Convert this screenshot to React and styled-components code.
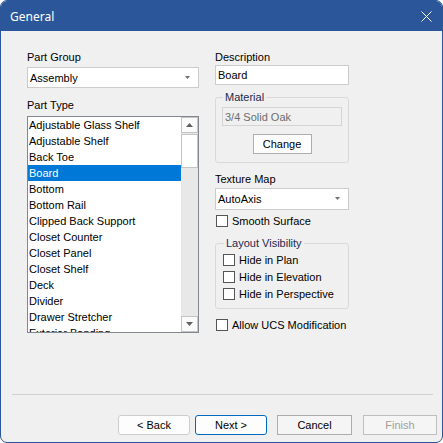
import React from "react";
import styled, { createGlobalStyle } from "styled-components";

const GlobalStyle = createGlobalStyle`
    html, body {
        margin: 0;
        padding: 0;
        background: #ffffff;
    }
    body {
        font-family: "Liberation Sans", Arial, sans-serif;
        font-size: 11px;
        color: #000000;
    }
`;

const Window = styled.div`
    width: 443px;
    height: 443px;
    box-sizing: border-box;
    border: 1px solid #2b579a;
    border-radius: 7px;
    overflow: hidden;
    display: flex;
    flex-direction: column;
    background: #f0f0f0;
`;

const TitleBar = styled.div`
    height: 30px;
    flex: none;
    background: #2b579a;
    color: #ffffff;
    display: flex;
    align-items: center;
    justify-content: space-between;
    padding: 0 10px 0 9px;
    font-family: "Noto Sans", "Segoe UI", sans-serif;
    font-size: 12px;
`;

const Body = styled.div`
    display: grid;
    grid-template-columns: 172px 134px;
    column-gap: 16px;
    padding: 20px 0 0 26px;
    align-items: start;
`;

const Column = styled.div`
    display: flex;
    flex-direction: column;
`;

const Label = styled.div`
    line-height: 13px;
    height: 13px;
    margin-top: ${(p) => p.$top || 0}px;
    white-space: nowrap;
`;

const Combo = styled.div`
    height: ${(p) => p.$h || 21}px;
    margin-top: ${(p) => p.$top || 0}px;
    box-sizing: border-box;
    border: 1px solid #cccccc;
    background: #ffffff;
    display: flex;
    align-items: center;
    justify-content: space-between;
    padding: 0 8px 0 2px;
    svg {
        flex: none;
    }
`;

const TextBox = styled.div`
    height: ${(p) => p.$h || 20}px;
    margin-top: ${(p) => p.$top || 0}px;
    box-sizing: border-box;
    border: 1px solid ${(p) => (p.$disabled ? "#d4d4d4" : "#cccccc")};
    background: ${(p) => (p.$disabled ? "#f0f0f0" : "#ffffff")};
    color: ${(p) => (p.$disabled ? "#6d6d6d" : "#000000")};
    display: flex;
    align-items: center;
    padding-left: 2px;
`;

const ListBox = styled.div`
    margin-top: 4px;
    height: 217px;
    box-sizing: border-box;
    border: 1px solid #828790;
    background: #ffffff;
    display: flex;
    overflow: hidden;
`;

const Items = styled.div`
    flex: 1;
    overflow: hidden;
`;

const Item = styled.div`
    height: 16px;
    line-height: 16px;
    padding-left: 1px;
    white-space: nowrap;
    background: ${(p) => (p.$selected ? "#0078d7" : "transparent")};
    color: ${(p) => (p.$selected ? "#ffffff" : "#000000")};
`;

const ScrollBar = styled.div`
    width: 17px;
    flex: none;
    background: #e8e8e8;
    display: flex;
    flex-direction: column;
`;

const ScrollButton = styled.div`
    height: 16px;
    box-sizing: border-box;
    border: 1px solid #c4c4c4;
    background: #fafafa;
    display: flex;
    align-items: center;
    justify-content: center;
    margin-top: ${(p) => (p.$down ? "auto" : "0")};
`;

const Thumb = styled.div`
    height: 34px;
    box-sizing: border-box;
    border: 1px solid #c4c4c4;
    background: #ffffff;
    margin-top: 1px;
`;

const Group = styled.fieldset`
    margin: ${(p) => p.$top || 0}px 0 0 0;
    padding: ${(p) => p.$pad};
    border: 1px solid #d9d9d9;
    border-radius: 3px;
    min-width: 0;
    display: flex;
    flex-direction: column;
    legend {
        padding: 0 2px;
        margin-left: 1px;
        line-height: 13px;
        color: #1c2a4e;
    }
`;

const Button = styled.div`
    width: ${(p) => p.$w}px;
    height: 20px;
    box-sizing: border-box;
    flex: none;
    display: flex;
    align-items: center;
    justify-content: center;
    border: 1px solid ${(p) => p.$border || "#adadad"};
    border-radius: ${(p) => (p.$round ? "3px" : "0")};
    background: ${(p) => p.$bg || "#fdfdfd"};
    color: ${(p) => (p.$disabled ? "#a0a0a0" : "#000000")};
    margin-left: ${(p) => p.$gap || 0}px;
    align-self: ${(p) => (p.$center ? "center" : "auto")};
    margin-top: ${(p) => p.$top || 0}px;
`;

const CheckRow = styled.div`
    height: 17px;
    display: flex;
    align-items: center;
    gap: 3px;
    margin-top: ${(p) => p.$top || 0}px;
    padding-left: ${(p) => p.$left || 0}px;
    white-space: nowrap;
`;

const Box = styled.span`
    width: 12px;
    height: 12px;
    box-sizing: border-box;
    border: 1px solid #555555;
    background: #ffffff;
    flex: none;
    margin-right: 1px;
`;

const Footer = styled.div`
    margin-top: auto;
    display: flex;
    flex-direction: column;
`;

const Separator = styled.div`
    height: 1px;
    background: #d0d0d0;
    margin: 0 9px 0 11px;
`;

const ButtonRow = styled.div`
    display: flex;
    justify-content: flex-end;
    padding: 20px 5px 7px 0;
`;

const Arrow = ({ up, size = 7, color = "#606060" }) => (
    <svg width={size} height={Math.ceil(size / 2) + 1} viewBox={`0 0 ${size} ${Math.ceil(size / 2) + 1}`}>
        <polygon
            points={
                up
                    ? `0,${Math.ceil(size / 2)} ${size},${Math.ceil(size / 2)} ${size / 2},0`
                    : `0,0 ${size},0 ${size / 2},${Math.ceil(size / 2)}`
            }
            fill={color}
        />
    </svg>
);

const Check = ({ label, top, left }) => (
    <CheckRow $top={top} $left={left}>
        <Box />
        {label}
    </CheckRow>
);

const partTypes = [
    "Adjustable Glass Shelf",
    "Adjustable Shelf",
    "Back Toe",
    "Board",
    "Bottom",
    "Bottom Rail",
    "Clipped Back Support",
    "Closet Counter",
    "Closet Panel",
    "Closet Shelf",
    "Deck",
    "Divider",
    "Drawer Stretcher",
    "Exterior Banding",
];

const App = () => {
    return (
        <>
            <GlobalStyle />
            <Window>
                <TitleBar>
                    <span>General</span>
                    <svg width="11" height="11" viewBox="0 0 11 11">
                        <path d="M0.5 0.5 L10.5 10.5 M10.5 0.5 L0.5 10.5" stroke="#ffffff" strokeWidth="1" />
                    </svg>
                </TitleBar>
                <Body>
                    <Column>
                        <Label>Part Group</Label>
                        <Combo $top={3}>
                            Assembly
                            <Arrow size={5} color="#707070" />
                        </Combo>
                        <Label $top={11}>Part Type</Label>
                        <ListBox>
                            <Items>
                                {partTypes.map((t) => (
                                    <Item key={t} $selected={t === "Board"}>
                                        {t}
                                    </Item>
                                ))}
                            </Items>
                            <ScrollBar>
                                <ScrollButton>
                                    <Arrow up />
                                </ScrollButton>
                                <Thumb />
                                <ScrollButton $down>
                                    <Arrow />
                                </ScrollButton>
                            </ScrollBar>
                        </ListBox>
                    </Column>
                    <Column>
                        <Label>Description</Label>
                        <TextBox $top={1}>Board</TextBox>
                        <Group $top={6} $pad="3px 6px 8px 6px">
                            <legend>Material</legend>
                            <TextBox $disabled $h={19}>3/4 Solid Oak</TextBox>
                            <Button $w={59} $center $top={8}>Change</Button>
                        </Group>
                        <Label $top={10}>Texture Map</Label>
                        <Combo $top={2} $h={22}>
                            AutoAxis
                            <Arrow size={5} color="#707070" />
                        </Combo>
                        <Check label="Smooth Surface" top={2} left={1} />
                        <Group $top={8} $pad="1px 6px 6px 7px">
                            <legend>Layout Visibility</legend>
                            <Check label="Hide in Plan" />
                            <Check label="Hide in Elevation" />
                            <Check label="Hide in Perspective" />
                        </Group>
                        <Check label="Allow UCS Modification" top={7} left={1} />
                    </Column>
                </Body>
                <Footer>
                    <Separator />
                    <ButtonRow>
                        <Button $w={72} $round $border="#cccccc">&lt; Back</Button>
                        <Button $w={72} $round $border="#0067c0" $gap={5}>Next &gt;</Button>
                        <Button $w={75} $gap={10} $bg="#f5f5f5">Cancel</Button>
                        <Button $w={74} $gap={11} $bg="#f5f5f5" $border="#bfbfbf" $disabled>Finish</Button>
                    </ButtonRow>
                </Footer>
            </Window>
        </>
    );
};

export default App;
